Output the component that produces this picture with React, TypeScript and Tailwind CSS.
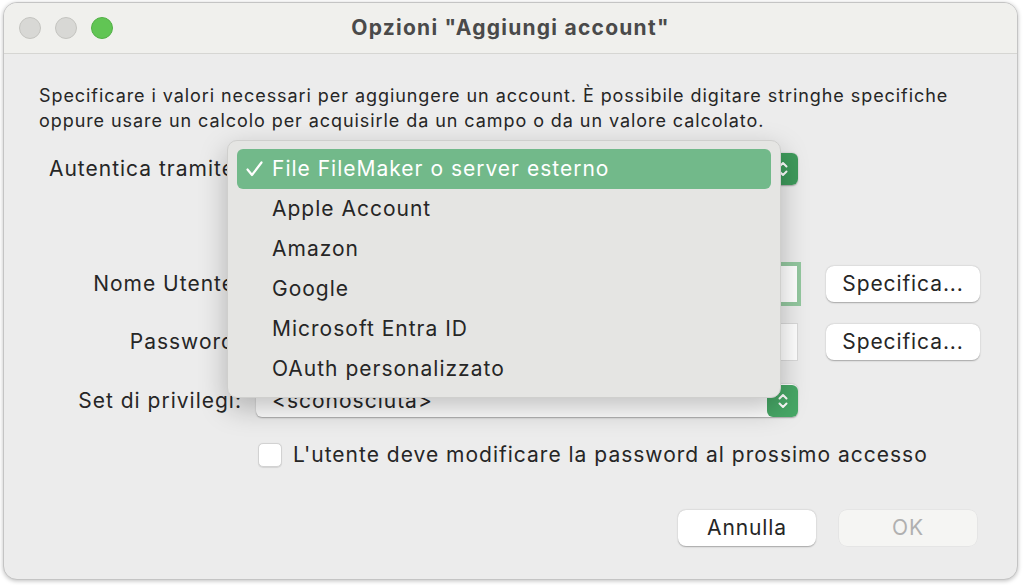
import React from 'react';

const font = { fontFamily: 'Inter, "Noto Sans", sans-serif' };

const Stepper: React.FC<{ dark?: boolean }> = ({ dark }) => (
  <div
    className={`flex h-[32px] w-[31px] items-center justify-center rounded-[6px] ${
      dark ? 'bg-[#3e9a5b]' : 'bg-[#47a766]'
    }`}
  >
    <svg width="12" height="20" viewBox="0 0 12 20" fill="none">
      <path d="M2.5 7.5L6 4l3.5 3.5" stroke="white" strokeWidth="2" strokeLinecap="round" strokeLinejoin="round" />
      <path d="M2.5 12.5L6 16l3.5-3.5" stroke="white" strokeWidth="2" strokeLinecap="round" strokeLinejoin="round" />
    </svg>
  </div>
);

const Label: React.FC<{ children: React.ReactNode }> = ({ children }) => (
  <div className="w-[203px] shrink-0 whitespace-nowrap text-right text-[21px] tracking-[1px] text-[#262626]">
    {children}
  </div>
);

const Button: React.FC<{ children: React.ReactNode; disabled?: boolean; w: string }> = ({ children, disabled, w }) => (
  <div
    className={`flex h-[36px] ${w} items-center justify-center rounded-[8px] text-[21px] tracking-[0.9px] ${
      disabled
        ? 'bg-[#f5f5f3] text-[#b0b0b0] shadow-[0_0_0_0.5px_rgba(0,0,0,0.06)]'
        : 'bg-white text-[#262626] shadow-[0_0.5px_1.5px_rgba(0,0,0,0.3)]'
    }`}
  >
    {children}
  </div>
);

const items = ['Apple Account', 'Amazon', 'Google', 'Microsoft Entra ID', 'OAuth personalizzato'];

export default function App() {
  return (
    <div className="h-[585px] w-[1024px] bg-white pl-[3px] pt-[2px]" style={font}>
      <div className="relative flex h-[578px] w-[1015px] flex-col overflow-hidden rounded-[14px] border border-[#c4c4c4] bg-[#ececec] shadow-[0_1px_4px_rgba(0,0,0,0.25)]">
        {/* title bar */}
        <div className="relative flex h-[51px] shrink-0 items-center border-b border-[#d6d6d3] bg-[#f0f0ed]">
          <div className="flex items-center gap-[14px] pl-[15px]">
            <span className="h-[22px] w-[22px] rounded-full border border-[#c4c4c0] bg-[#d8d8d5]" />
            <span className="h-[22px] w-[22px] rounded-full border border-[#c4c4c0] bg-[#d8d8d5]" />
            <span className="h-[22px] w-[22px] rounded-full border border-[#52b046] bg-[#61c554]" />
          </div>
          <div className="absolute inset-x-0 text-center text-[21px] font-bold tracking-[1.25px] text-[#4a4a4a]">
            Opzioni "Aggiungi account"
          </div>
        </div>

        {/* body */}
        <div className="flex flex-col pl-[35px] pt-[29px]">
          <p className="whitespace-nowrap text-[18px] leading-[25px] tracking-[0.93px] text-[#262626]">
            Specificare i valori necessari per aggiungere un account. È possibile digitare stringhe specifiche
            <br />
            oppure usare un calcolo per acquisirle da un campo o da un valore calcolato.
          </p>

          <div className="mt-[20px] flex h-[32px] items-center gap-[14px]">
            <Label>Autentica tramite:</Label>
            <div className="flex h-[32px] w-[542px] items-center justify-between rounded-[6px] bg-white pl-[16px] text-[21px] tracking-[1px] text-[#262626] shadow-[0_0.5px_1.5px_rgba(0,0,0,0.3)]">
              File FileMaker o server esterno
              <Stepper dark />
            </div>
          </div>

          <div className="mt-[81px] flex h-[36px] items-center gap-[14px]">
            <Label>Nome Utente:</Label>
            <div className="h-[36px] w-[541px] bg-white ring-[4px] ring-[#93c79f]" />
            <div className="ml-[15px]">
              <Button w="w-[154px]">Specifica...</Button>
            </div>
          </div>

          <div className="mt-[22px] flex h-[36px] items-center gap-[14px]">
            <Label>Password:</Label>
            <div className="h-[36px] w-[541px] bg-white shadow-[0_0_0_1px_rgba(0,0,0,0.08)]" />
            <div className="ml-[15px]">
              <Button w="w-[154px]">Specifica...</Button>
            </div>
          </div>

          <div className="mt-[24px] flex h-[33px] items-center gap-[14px]">
            <Label>Set di privilegi:</Label>
            <div className="flex h-[33px] w-[542px] items-center justify-between rounded-[6px] bg-white pl-[16px] text-[21px] tracking-[1px] text-[#262626] shadow-[0_0.5px_1.5px_rgba(0,0,0,0.3)]">
              &lt;sconosciuta&gt;
              <Stepper />
            </div>
          </div>

          <div className="mt-[25px] flex h-[25px] items-center gap-[11px] pl-[219px]">
            <span className="h-[24px] w-[24px] rounded-[5px] border border-[#d2d2d2] bg-white shadow-[0_0.5px_1px_rgba(0,0,0,0.1)]" />
            <span className="whitespace-nowrap text-[21px] tracking-[1px] text-[#262626]">
              L'utente deve modificare la password al prossimo accesso
            </span>
          </div>

          <div className="mt-[43px] flex justify-end gap-[23px] pr-[40px]">
            <Button w="w-[138px]">Annulla</Button>
            <Button w="w-[138px]" disabled>
              OK
            </Button>
          </div>
        </div>

        {/* open popup menu */}
        <div className="absolute left-[223px] top-[137px] w-[554px] rounded-[10px] border border-[#cfcfcd] bg-[#e5e5e3] px-[9px] py-[8px] shadow-[0_10px_28px_rgba(0,0,0,0.25)]">
          <div className="flex h-[40px] items-center whitespace-nowrap rounded-[6px] bg-[#72b98a] pl-[9px] text-[21px] tracking-[1px] text-white">
            <span className="flex w-[26px] items-center">
              <svg width="17" height="16" viewBox="0 0 17 16" fill="none">
                <path d="M1.5 8.5L6 14L15.5 1.5" stroke="white" strokeWidth="2.2" strokeLinecap="round" strokeLinejoin="round" />
              </svg>
            </span>
            File FileMaker o server esterno
          </div>
          {items.map((it) => (
            <div
              key={it}
              className="flex h-[40px] items-center whitespace-nowrap pl-[35px] text-[21px] tracking-[1px] text-[#262626]"
            >
              {it}
            </div>
          ))}
        </div>
      </div>
    </div>
  );
}
